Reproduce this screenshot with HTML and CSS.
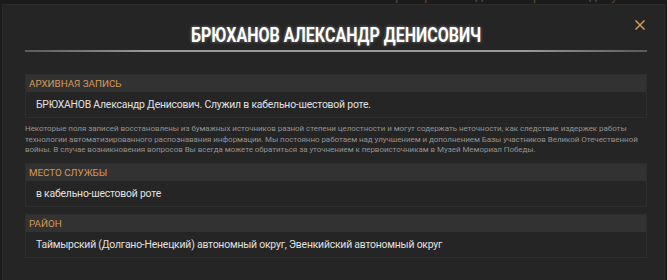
FILE: index.html
```html
<!DOCTYPE html>
<html lang="ru">
<head>
<meta charset="utf-8">
<link rel="stylesheet" href="styles.css">
</head>
<body>
<div class="behind"><span class="behind-text">Проверьте сведения в архивных документах</span></div>
<div class="modal">
  <button class="close" aria-label="Закрыть">
    <svg width="12" height="12" viewBox="0 0 12 12"><path d="M1.5 1.5L10.5 10.5M10.5 1.5L1.5 10.5" stroke="#d39a5e" stroke-width="1.5" fill="none"/></svg>
  </button>
  <h1 class="title">БРЮХАНОВ АЛЕКСАНДР ДЕНИСОВИЧ</h1>
  <div class="rule"></div>
  <div class="content">
    <section class="field">
      <div class="field-head">АРХИВНАЯ ЗАПИСЬ</div>
      <div class="field-body">БРЮХАНОВ Александр Денисович. Служил в кабельно-шестовой роте.</div>
    </section>
    <p class="note">Некоторые поля записей восстановлены из бумажных источников разной степени целостности и могут содержать неточности, как следствие издержек работы технологии автоматизированного распознавания информации. Мы постоянно работаем над улучшением и дополнением Базы участников Великой Отечественной войны. В случае возникновения вопросов Вы всегда можете обратиться за уточнением к первоисточникам в Музей Мемориал Победы.</p>
    <section class="field">
      <div class="field-head">МЕСТО СЛУЖБЫ</div>
      <div class="field-body">в кабельно-шестовой роте</div>
    </section>
    <section class="field">
      <div class="field-head">РАЙОН</div>
      <div class="field-body">Таймырский (Долгано-Ненецкий) автономный округ, Эвенкийский автономный округ</div>
    </section>
  </div>
</div>
</body>
</html>
```
FILE: styles.css
```css
html, body {
  margin: 0;
  padding: 0;
  background: #1b1b1b;
  height: 280px;
  overflow: hidden;
}
body {
  font-family: "Roboto", "Noto Sans", sans-serif;
  position: relative;
}
.behind {
  height: 4px;
  overflow: hidden;
  padding-left: 386px;
}
.behind-text {
  display: block;
  margin-top: -11px;
  font-size: 13px;
  line-height: 14px;
  color: #5e4a34;
}
.modal {
  position: relative;
  margin: 0 2px;
  background: #252525;
  border: 1px solid #2b2b2b;
  border-bottom: none;
  height: 280px;
  box-sizing: border-box;
  padding: 18px 17px 0 22px;
}
.close {
  position: absolute;
  top: 13px;
  right: 17px;
  width: 14px;
  height: 14px;
  padding: 0;
  border: 0;
  background: none;
  display: flex;
  align-items: center;
  justify-content: center;
}
.title {
  margin: 0;
  text-align: center;
  font-family: "Roboto", sans-serif;
  font-weight: 700;
  font-size: 20px;
  line-height: 24px;
  color: #fff;
  text-shadow: 0 0 4px rgba(255,255,255,0.45);
  transform: scaleX(0.8);
}
.rule {
  margin-top: 3px;
  height: 2px;
  background: linear-gradient(to right, #5a5a5a, #9a9a9a 20%, #9a9a9a 80%, #5a5a5a);
}
.content {
  padding-top: 22px;
  display: flex;
  flex-direction: column;
}
.field {
  border: 1px solid #2e2e2e;
}
.field + .field {
  margin-top: 7px;
}
.field-head {
  background: #323232;
  height: 17px;
  line-height: 17px;
  padding-left: 3px;
  font-size: 9.8px;
  color: #d59a5a;
}
.field-body {
  height: 25px;
  line-height: 25px;
  padding-left: 10px;
  font-size: 10.4px;
  letter-spacing: -0.2px;
  color: #e0e0e0;
  white-space: nowrap;
}
.note {
  margin: 6px 0 7px 0;
  font-size: 8px;
  letter-spacing: -0.05px;
  line-height: 10.5px;
  color: #929292;
}
```
